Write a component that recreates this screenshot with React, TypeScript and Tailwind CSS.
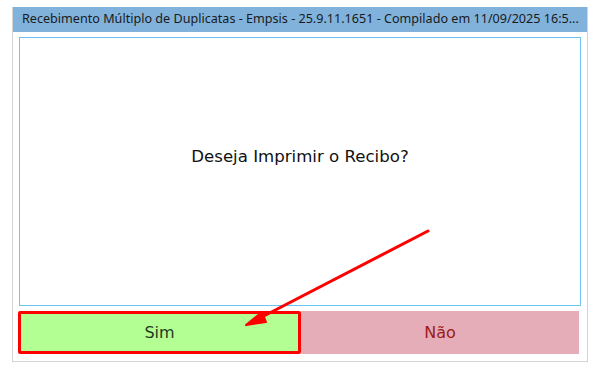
import React from "react";

export default function App() {
  return (
    <div className="relative w-[608px] h-[391px] bg-white">
      <div className="absolute left-[12px] top-[7px] w-[576px] h-[355px] flex flex-col border border-[#d4d4d4] border-t-0 bg-white">
        <div className="h-[25px] bg-[#80b2db] flex items-center pl-[9px] overflow-hidden whitespace-nowrap text-[12.6px] text-[#1a1a1a] [font-family:'Noto_Sans',sans-serif]">
          Recebimento Múltiplo de Duplicatas - Empsis - 25.9.11.1651 - Compilado em 11/09/2025 16:5...
        </div>
        <div className="flex-1 flex flex-col px-[6px] pt-[5px] pb-[7px]">
          <div className="flex-1 border border-[#6ec3f5] flex items-center justify-center pb-[28px]">
            <span className="text-[16.6px] text-[#111] [font-family:'DejaVu_Sans',sans-serif]">Deseja Imprimir o Recibo?</span>
          </div>
          <div className="mt-[5px] h-[43px] flex">
            <div className="w-[283px] -ml-[1px] bg-[#b3ff93] border-[3px] border-[#ff0000] rounded-[2px] flex items-center justify-center text-[16px] text-[#1f3b1f] [font-family:'DejaVu_Sans',sans-serif]">
              Sim
            </div>
            <div className="flex-1 mr-[2px] bg-[#e5adb7] flex items-center justify-center text-[16px] text-[#9b1a1a] [font-family:'DejaVu_Sans',sans-serif]">
              Não
            </div>
          </div>
        </div>
      </div>
      <svg className="absolute left-0 top-0" width="608" height="391">
        <line x1="428" y1="231" x2="258" y2="319" stroke="#ff0000" strokeWidth="3" strokeLinecap="round" />
        <polygon points="246,325 262,312 266,322" fill="#ff0000" stroke="#ff0000" strokeWidth="2" strokeLinejoin="round" />
      </svg>
    </div>
  );
}
